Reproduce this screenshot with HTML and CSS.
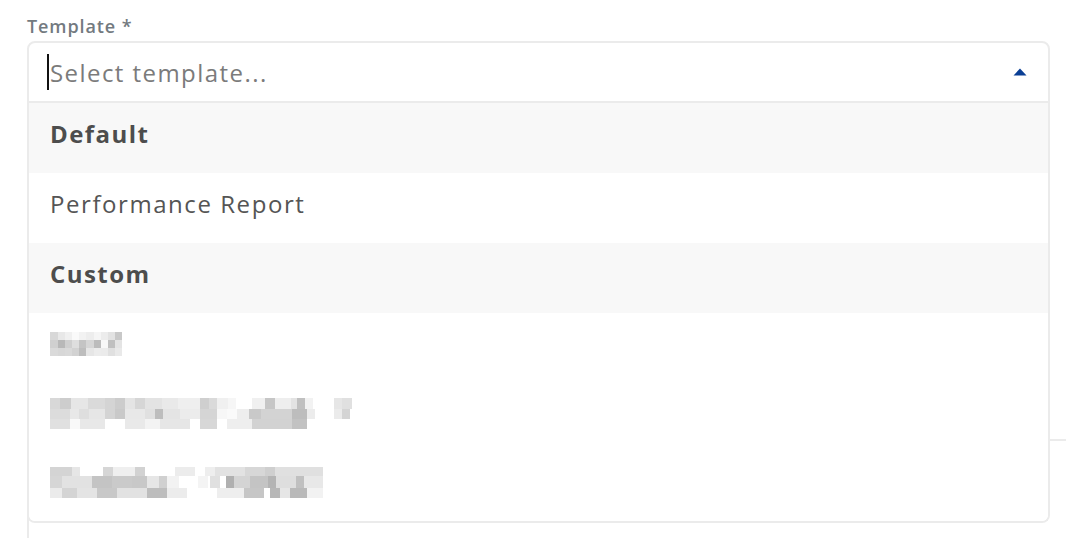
FILE: index.html
```html
<!DOCTYPE html>
<html>
<head>
<meta charset="utf-8">
<link rel="stylesheet" href="styles.css">
</head>
<body>
<div class="field">
  <label class="label">Template *</label>
  <div class="select">
    <div class="control">
      <span class="caret"></span>
      <span class="placeholder">Select template...</span>
      <svg class="arrow" width="14" height="8" viewBox="0 0 14 8"><path d="M7 0.5 L13.5 7.5 L0.5 7.5 Z" fill="#0a3f95"/></svg>
    </div>
    <div class="menu">
      <div class="group">Default</div>
      <div class="option">Performance Report</div>
      <div class="group">Custom</div>
      <div class="option">
        <svg class="mosaic" width="72" height="24" viewBox="0 0 72 24">
          <rect x="0" y="0" width="8" height="8" fill="#d8d8d8"/><rect x="8" y="0" width="7" height="8" fill="#e8e8e8"/><rect x="15" y="0" width="7" height="8" fill="#f0f0f0"/><rect x="22" y="0" width="7" height="8" fill="#fafafa"/><rect x="29" y="0" width="7" height="8" fill="#f2f2f2"/><rect x="36" y="0" width="8" height="8" fill="#ededed"/><rect x="44" y="0" width="7" height="8" fill="#f5f5f5"/><rect x="51" y="0" width="7" height="8" fill="#ececec"/><rect x="58" y="0" width="7" height="8" fill="#e2e2e2"/><rect x="65" y="0" width="7" height="8" fill="#c8c8c8"/>
          <rect x="0" y="8" width="8" height="8" fill="#d0d0d0"/><rect x="8" y="8" width="7" height="8" fill="#b8b8b8"/><rect x="15" y="8" width="7" height="8" fill="#cfcfcf"/><rect x="22" y="8" width="7" height="8" fill="#dedede"/><rect x="29" y="8" width="7" height="8" fill="#c4c4c4"/><rect x="36" y="8" width="8" height="8" fill="#d6d6d6"/><rect x="44" y="8" width="7" height="8" fill="#bcbcbc"/><rect x="51" y="8" width="7" height="8" fill="#f8f8f8"/><rect x="58" y="8" width="7" height="8" fill="#c0c0c0"/><rect x="65" y="8" width="7" height="8" fill="#e4e4e4"/>
          <rect x="0" y="16" width="8" height="8" fill="#dadada"/><rect x="8" y="16" width="7" height="8" fill="#d7d7d7"/><rect x="15" y="16" width="7" height="8" fill="#d9d9d9"/><rect x="22" y="16" width="7" height="8" fill="#d2d2d2"/><rect x="29" y="16" width="7" height="8" fill="#bdbdbd"/><rect x="36" y="16" width="8" height="8" fill="#e6e6e6"/><rect x="44" y="16" width="7" height="8" fill="#ececec"/><rect x="51" y="16" width="7" height="8" fill="#ebebeb"/><rect x="58" y="16" width="7" height="8" fill="#e0e0e0"/><rect x="65" y="16" width="7" height="8" fill="#e9e9e9"/>
        </svg>
      </div>
      <div class="option">
        <svg class="mosaic" width="302" height="31" viewBox="0 0 302 31">
          <rect x="0" y="0" width="10" height="11" fill="#d8d8d8"/><rect x="10" y="0" width="11" height="11" fill="#cdcdcd"/><rect x="21" y="0" width="17" height="11" fill="#e6e6e6"/><rect x="38" y="0" width="17" height="11" fill="#dadada"/><rect x="55" y="0" width="10" height="11" fill="#d4d4d4"/><rect x="65" y="0" width="10" height="11" fill="#cccccc"/><rect x="75" y="0" width="10" height="11" fill="#e4e4e4"/><rect x="85" y="0" width="10" height="11" fill="#d6d6d6"/><rect x="95" y="0" width="17" height="11" fill="#e3e3e3"/><rect x="112" y="0" width="16" height="11" fill="#e9e9e9"/><rect x="128" y="0" width="22" height="11" fill="#efefef"/><rect x="150" y="0" width="9" height="11" fill="#cfcfcf"/><rect x="159" y="0" width="8" height="11" fill="#dadada"/><rect x="167" y="0" width="11" height="11" fill="#f0f0f0"/><rect x="178" y="0" width="8" height="11" fill="#f6f6f6"/><rect x="186" y="0" width="16" height="11" fill="#ffffff"/><rect x="202" y="0" width="13" height="11" fill="#f0f0f0"/><rect x="215" y="0" width="10" height="11" fill="#c6c6c6"/><rect x="225" y="0" width="16" height="11" fill="#eeeeee"/><rect x="241" y="0" width="6" height="11" fill="#e3e3e3"/><rect x="247" y="0" width="8" height="11" fill="#c0c0c0"/><rect x="255" y="0" width="8" height="11" fill="#f2f2f2"/><rect x="284" y="0" width="8" height="11" fill="#e6e6e6"/><rect x="292" y="0" width="10" height="11" fill="#e0e0e0"/>
          <rect x="0" y="11" width="20" height="10" fill="#dcdcdc"/><rect x="20" y="11" width="9" height="10" fill="#e8e8e8"/><rect x="29" y="11" width="10" height="10" fill="#dedede"/><rect x="39" y="11" width="16" height="10" fill="#e6e6e6"/><rect x="55" y="11" width="10" height="10" fill="#d4d4d4"/><rect x="65" y="11" width="10" height="10" fill="#c9c9c9"/><rect x="75" y="11" width="20" height="10" fill="#e8e8e8"/><rect x="95" y="11" width="10" height="10" fill="#e0e0e0"/><rect x="105" y="11" width="8" height="10" fill="#bdbdbd"/><rect x="113" y="11" width="17" height="10" fill="#e4e4e4"/><rect x="130" y="11" width="20" height="10" fill="#ececec"/><rect x="150" y="11" width="17" height="10" fill="#d5d5d5"/><rect x="167" y="11" width="10" height="10" fill="#f7f7f7"/><rect x="177" y="11" width="10" height="10" fill="#fafafa"/><rect x="187" y="11" width="12" height="10" fill="#eeeeee"/><rect x="199" y="11" width="12" height="10" fill="#c9c9c9"/><rect x="211" y="11" width="31" height="10" fill="#d3d3d3"/><rect x="242" y="11" width="15" height="10" fill="#bdbdbd"/><rect x="257" y="11" width="8" height="10" fill="#ececec"/><rect x="284" y="11" width="8" height="10" fill="#ebebeb"/><rect x="292" y="11" width="8" height="10" fill="#d4d4d4"/>
          <rect x="0" y="21" width="20" height="10" fill="#e0e0e0"/><rect x="20" y="21" width="10" height="10" fill="#f9f9f9"/><rect x="30" y="21" width="25" height="10" fill="#e8e8e8"/><rect x="75" y="21" width="20" height="10" fill="#e9e9e9"/><rect x="95" y="21" width="15" height="10" fill="#f3f3f3"/><rect x="110" y="21" width="30" height="10" fill="#e6e6e6"/><rect x="150" y="21" width="17" height="10" fill="#d7d7d7"/><rect x="177" y="21" width="25" height="10" fill="#eeeeee"/><rect x="202" y="21" width="40" height="10" fill="#d2d2d2"/><rect x="242" y="21" width="15" height="10" fill="#c2c2c2"/>
        </svg>
      </div>
      <div class="option last">
        <svg class="mosaic" width="273" height="31" viewBox="0 0 273 31">
          <rect x="0" y="0" width="22" height="9" fill="#d4d4d4"/><rect x="22" y="0" width="8" height="9" fill="#e6e6e6"/><rect x="53" y="0" width="10" height="9" fill="#d6d6d6"/><rect x="63" y="0" width="22" height="9" fill="#efefef"/><rect x="85" y="0" width="10" height="9" fill="#d2d2d2"/><rect x="125" y="0" width="20" height="9" fill="#ececec"/><rect x="155" y="0" width="10" height="9" fill="#eeeeee"/><rect x="165" y="0" width="30" height="9" fill="#e2e2e2"/><rect x="195" y="0" width="20" height="9" fill="#d7d7d7"/><rect x="215" y="0" width="10" height="9" fill="#cfcfcf"/><rect x="225" y="0" width="48" height="9" fill="#e0e0e0"/>
          <rect x="0" y="9" width="12" height="12" fill="#d6d6d6"/><rect x="12" y="9" width="30" height="12" fill="#e2e2e2"/><rect x="42" y="9" width="20" height="12" fill="#c4c4c4"/><rect x="62" y="9" width="20" height="12" fill="#cacaca"/><rect x="82" y="9" width="15" height="12" fill="#c8c8c8"/><rect x="97" y="9" width="12" height="12" fill="#e6e6e6"/><rect x="109" y="9" width="8" height="12" fill="#d0d0d0"/><rect x="117" y="9" width="12" height="12" fill="#f2f2f2"/><rect x="148" y="9" width="10" height="12" fill="#f4f4f4"/><rect x="160" y="9" width="10" height="12" fill="#e0e0e0"/><rect x="176" y="9" width="8" height="12" fill="#b0b0b0"/><rect x="184" y="9" width="16" height="12" fill="#d4d4d4"/><rect x="200" y="9" width="18" height="12" fill="#c4c4c4"/><rect x="218" y="9" width="8" height="12" fill="#b4b4b4"/><rect x="226" y="9" width="20" height="12" fill="#dedede"/><rect x="246" y="9" width="8" height="12" fill="#c0c0c0"/><rect x="254" y="9" width="19" height="12" fill="#e8e8e8"/>
          <rect x="0" y="21" width="12" height="10" fill="#ebebeb"/><rect x="12" y="21" width="15" height="10" fill="#d4d4d4"/><rect x="27" y="21" width="20" height="10" fill="#e4e4e4"/><rect x="47" y="21" width="20" height="10" fill="#c8c8c8"/><rect x="67" y="21" width="30" height="10" fill="#e2e2e2"/><rect x="97" y="21" width="20" height="10" fill="#bdbdbd"/><rect x="117" y="21" width="20" height="10" fill="#ececec"/><rect x="167" y="21" width="27" height="10" fill="#eeeeee"/><rect x="194" y="21" width="20" height="10" fill="#c6c6c6"/><rect x="220" y="21" width="10" height="10" fill="#b7b7b7"/><rect x="230" y="21" width="10" height="10" fill="#e6e6e6"/><rect x="240" y="21" width="17" height="10" fill="#b9b9b9"/><rect x="257" y="21" width="16" height="10" fill="#f2f2f2"/>
        </svg>
      </div>
    </div>
  </div>
  <div class="under"></div>
</div>
</body>
</html>
```

FILE: styles.css
```css
* { box-sizing: border-box; }
html, body { margin: 0; padding: 0; background: #ffffff; }
body {
  font-family: "Open Sans", "Noto Sans", "Liberation Sans", sans-serif;
  width: 1066px;
  height: 538px;
  overflow: hidden;
}
.field {
  position: relative;
  padding: 14px 16px 0 27px;
}
.label {
  display: block;
  font-size: 18px;
  font-weight: 600;
  letter-spacing: 0.05em;
  color: #737a80;
  line-height: 24px;
  height: 27px;
}
.select {
  position: relative;
}
.control {
  height: 62px;
  border: 2px solid #ebebeb;
  border-radius: 8px 8px 0 0;
  display: flex;
  align-items: center;
  padding: 0 21px 0 18px;
  background: #ffffff;
}
.caret {
  width: 2px;
  height: 36px;
  background: #111111;
  margin-right: 1px;
}
.placeholder {
  flex: 1;
  font-size: 24px;
  letter-spacing: 0.06em;
  color: #7b7b7b;
  line-height: 30px;
  padding-top: 2px;
}
.arrow {
  display: block;
}
.menu {
  position: absolute;
  left: 0;
  right: 0;
  top: 62px;
  z-index: 2;
  background: #ffffff;
  border: 2px solid #ebebeb;
  border-top: none;
  border-radius: 0 0 8px 8px;
  overflow: hidden;
}
.group, .option {
  height: 70px;
  display: flex;
  align-items: center;
  padding-left: 21px;
  padding-bottom: 9px;
  font-size: 24px;
  letter-spacing: 0.065em;
}
.group {
  background: #f8f8f8;
  font-weight: 700;
  letter-spacing: 0.06em;
  color: #4d4d4d;
}
.option {
  background: #ffffff;
  color: #555555;
}
.option.last { height: 68px; }
.mosaic { display: block; }
.under {
  margin-top: 336px;
  height: 120px;
  border-top: 2px solid #ebebeb;
  border-left: 2px solid #ebebeb;
  margin-right: -16px;
}
```
